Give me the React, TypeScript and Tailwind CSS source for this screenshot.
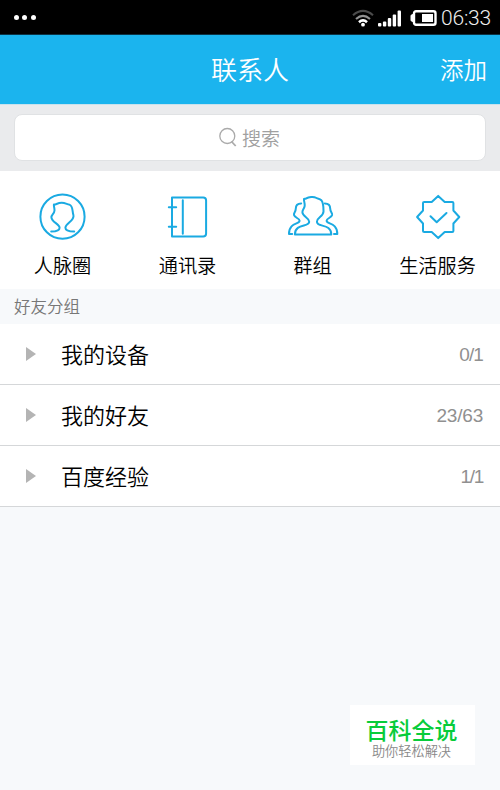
import type { ReactNode } from "react";

const shortcuts: { label: string; icon: ReactNode }[] = [
  {
    label: "人脉圈",
    icon: (
      <>
        <circle cx="27.5" cy="28.7" r="22.1" />
        <path d="M16.2 43.6C21.2 43.6 24.6 42.3 24.6 39.8C24.6 35.8 16.4 34.3 16.4 29.3C16.4 26.3 19.3 25.8 19.5 22.5C19.6 20 18.7 18.3 18.9 16.5C20.8 17 22.2 14.8 26.7 14.8C30.2 14.8 31.7 16.1 34.2 16.6C38.3 17.6 37 23 38.4 27C40 32.6 30.4 35.5 30.4 39.8C30.4 42.3 34.2 43.6 39.2 43.6" />
      </>
    ),
  },
  {
    label: "通讯录",
    icon: (
      <>
        <path d="M12 9.4H43.2Q46.1 9.4 46.1 12.4V45.6Q46.1 48.5 43.2 48.5H12Z" />
        <path d="M22.8 12.3V45.7M8.8 19.3H16.2M8.8 38.7H16.2" />
      </>
    ),
  },
  {
    label: "群组",
    icon: (
      <>
        <path d="M16.2 15.4C12.5 15.5 10.8 17.5 10.8 20.5C10.8 24 8.5 24.5 9 27C9.6 29.8 14.6 30.3 14.6 32.7C14.6 36.5 4 34.2 4 46H7.2" />
        <path d="M39.8 15.4C43.5 15.5 45.2 17.5 45.2 20.5C45.2 24 47.5 24.5 47.1 27C46.5 29.8 41.6 30.3 41.6 32.7C41.6 36.5 52.3 34.2 52.3 46H49" />
        <path d="M9.9 46.5H46.3C46.3 35 31.9 39.8 31.9 33.7C31.9 29.5 38.5 28.5 38.5 23.5C38.5 19.5 38.6 14.8 36.3 12.2C34.4 10.2 33.1 11.2 31.5 10C28.5 8.2 23.5 9 21.3 10.4C20.4 11 19.7 10.7 19 10.9C18.5 12.5 20 15 19.7 17.8C19.3 20.8 17.3 21.5 17.4 24.2C17.6 28.8 24.2 29.6 24.2 33.7C24.2 39.5 9.9 35 9.9 46.5Z" />
      </>
    ),
  },
  {
    label: "生活服务",
    icon: (
      <>
        <path d="M28.2 7.9L21.7 13.9H14.2Q13 13.9 13 15V22.5L7.1 29L13 35.5V43Q13 44.1 14.2 44.1H21.7L28.2 50.1L34.7 44.1H42.2Q43.4 44.1 43.4 43V35.5L49.3 29L43.4 22.5V15Q43.4 13.9 42.2 13.9H34.7Z" />
        <path d="M20.5 28.2L26.7 34.2L36.5 25" />
      </>
    ),
  },
];

const groups = [
  { name: "我的设备", count: "0/1", tracking: "tracking-[-0.9px]" },
  { name: "我的好友", count: "23/63", tracking: "tracking-[-0.2px]" },
  { name: "百度经验", count: "1/1", tracking: "tracking-[-1.3px]" },
];

const StatusBar = () => (
  <div className="flex h-[35px] items-center justify-between border-b border-[#0b3345] bg-black pr-[8px] pl-[14px] text-white">
    <div className="flex gap-[3.3px]">
      <span className="h-[5px] w-[5px] rounded-full bg-white" />
      <span className="h-[5px] w-[5px] rounded-full bg-white" />
      <span className="h-[5px] w-[5px] rounded-full bg-white" />
    </div>
    <div className="flex items-center pt-[2px]">
      <svg className="mr-1 h-[18px] w-[22px]" viewBox="0 0 22 18" fill="none" strokeWidth="2.1">
        <path d="M1 6.3Q11-2.4 21 6.3" stroke="#4b4b4b" />
        <path d="M4 10Q11 3.8 18 10" stroke="#929292" />
        <path d="M7 13.2Q11 9.5 15 13.2" stroke="#fff" strokeWidth="2.6" />
        <circle cx="11" cy="15.7" r="1.9" fill="#fff" />
      </svg>
      <svg className="mr-[9px] h-[17px] w-[23px]" viewBox="0 0 23 17" fill="#fff">
        <rect x="0" y="13" width="3.4" height="3.5" rx="1" />
        <rect x="4.9" y="11.5" width="3.4" height="5" rx="1" />
        <rect x="9.8" y="8" width="3.4" height="8.5" rx="1" />
        <rect x="14.7" y="4.5" width="3.4" height="12" rx="1" />
        <rect x="19.6" y="0.5" width="3.4" height="16" rx="1" />
      </svg>
      <svg className="mr-[4px] h-4 w-[27px]" viewBox="0 0 27 16">
        <path d="M4 4L1 5.3V10.7L4 12Z" fill="#fff" stroke="#fff" />
        <rect x="4" y="1.3" width="21.5" height="13.4" rx="2" fill="none" stroke="#fff" strokeWidth="2.4" />
        <rect x="12" y="4" width="11" height="8" fill="#fff" />
      </svg>
      <span className="w-[51px] font-[Roboto,sans-serif] text-[21px] leading-none font-light tracking-[-0.2px] text-[#eee]">
        06:33
      </span>
    </div>
  </div>
);

const App = () => {
  return (
    <div className="flex h-[790px] w-[500px] flex-col overflow-hidden bg-[#f7f9fb] font-['Noto_Sans_CJK_SC',sans-serif] font-[350] text-black">
      <StatusBar />

      <header className="grid h-[69px] grid-cols-3 items-center bg-[#1bb4ee] pr-[13px] text-white">
        <h1 className="col-start-2 pb-px pl-[13px] text-center text-[26px] leading-none font-[350]">联系人</h1>
        <button className="justify-self-end text-[23.5px] leading-none font-[350]">添加</button>
      </header>

      <div className="h-[67px] border-t border-[#c9e2ed] bg-[#eaebed] px-[14px] pt-[9px]">
        <div className="flex h-[47px] items-center justify-center gap-[5px] rounded-lg border border-[#e0e2e4] bg-white pr-[2px] text-[#a0a0a0]">
          <svg className="mb-px h-5 w-[19px]" viewBox="0 0 19 20" fill="none" stroke="#aaa" strokeWidth="1.3">
            <circle cx="9.3" cy="9" r="7.5" />
            <path d="M13.5 14.5L17.7 19" strokeWidth="1.8" />
          </svg>
          <span className="text-[19px] leading-none">搜索</span>
        </div>
      </div>

      <nav className="grid h-[118px] grid-cols-4 bg-white pt-[17px]">
        {shortcuts.map((item) => (
          <div key={item.label} className="flex flex-col items-center">
            <svg
              className="h-14 w-14"
              viewBox="0 0 56 56"
              fill="none"
              stroke="#1aaae2"
              strokeWidth="2"
              strokeLinecap="round"
              strokeLinejoin="round"
            >
              {item.icon}
            </svg>
            <span className="mt-[11px] text-[19.2px] leading-[20px]">{item.label}</span>
          </div>
        ))}
      </nav>

      <h2 className="flex h-[35px] items-center pl-[14px] text-[16.5px] leading-none font-[350] text-[#777]">
        好友分组
      </h2>

      <ul>
        {groups.map((group) => (
          <li
            key={group.name}
            className="flex h-[61px] items-center border-b border-[#d5d7d9] bg-white pr-[17px] pl-[26px]"
          >
            <svg className="h-[14px] w-[10px]" viewBox="0 0 10 14" fill="#b4b4b4">
              <path d="M0 0L10 7L0 14Z" />
            </svg>
            <span className="ml-[25px] pb-[2px] text-[22px] leading-none">{group.name}</span>
            <span
              className={`ml-auto font-['Liberation_Sans',sans-serif] text-[19px] leading-none text-[#909090] ${group.tracking}`}
            >
              {group.count}
            </span>
          </li>
        ))}
      </ul>

      <div className="mt-auto mr-[25px] mb-[25px] flex h-[60px] w-[125px] flex-col items-center self-end bg-white pt-[7px] pr-[2px]">
        <p className="text-[23px] leading-[34px] font-medium text-[#08cc3a]">百科全说</p>
        <p className="-mt-[2px] text-[13.2px] leading-[14px] text-[#888]">助你轻松解决</p>
      </div>
    </div>
  );
};

export default App;
